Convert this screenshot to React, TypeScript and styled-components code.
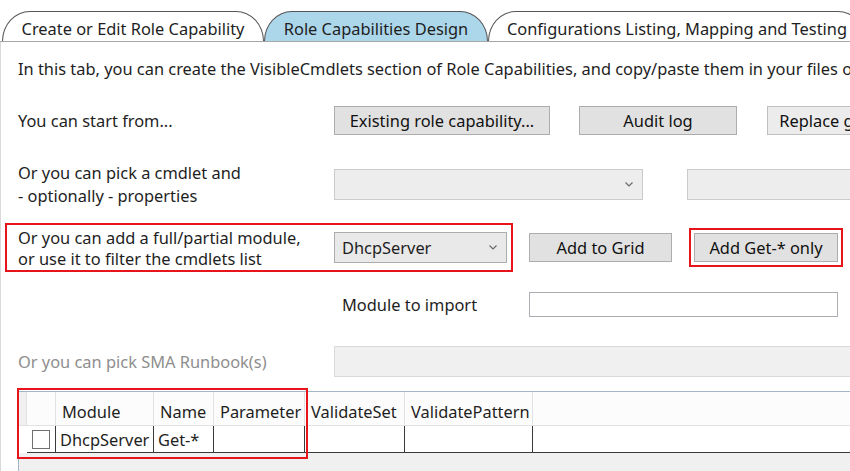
import React from "react";
import styled, { createGlobalStyle } from "styled-components";

const GlobalStyle = createGlobalStyle`
  html, body {
    margin: 0;
    padding: 0;
    background: #fff;
  }
  body {
    font-family: "Noto Sans", "Open Sans", sans-serif;
    font-size: 16.4px;
    color: #1e1e1e;
  }
`;

const Window = styled.div`
  width: 850px;
  height: 471px;
  overflow: hidden;
  background: #fff;
  display: flex;
  flex-direction: column;
`;

const TabStrip = styled.div`
  display: flex;
  align-items: flex-end;
  height: 41px;
  padding-left: 2px;
  border-bottom: 1px solid #a6a6a6;
  flex-shrink: 0;
  overflow: hidden;
`;

const Tab = styled.div<{ $active?: boolean; $w: number }>`
  flex: 0 0 ${(p) => p.$w}px;
  height: 30px;
  box-sizing: border-box;
  border: 1px solid #555;
  border-bottom: none;
  border-radius: 28px 28px 0 0 / 30px 30px 0 0;
  background: ${(p) => (p.$active ? "#acd6ea" : "#fff")};
  display: flex;
  align-items: center;
  justify-content: center;
  padding-top: 3px;
  white-space: nowrap;
`;

const Panel = styled.div`
  flex: 1;
  min-height: 0;
  border-left: 1px solid #d9d9d9;
  padding: 17px 0 0 17px;
  display: flex;
  flex-direction: column;
`;

const Intro = styled.div`
  line-height: 20px;
  height: 20px;
  white-space: nowrap;
`;

const Row = styled.div<{ $top: number; $h?: number }>`
  display: flex;
  align-items: center;
  margin-top: ${(p) => p.$top}px;
  ${(p) => (p.$h ? `height: ${p.$h}px;` : "")}
  white-space: nowrap;
  flex-shrink: 0;
`;

const Label = styled.div<{ $muted?: boolean; $lh?: number }>`
  flex: 0 0 316px;
  line-height: ${(p) => p.$lh ?? 20}px;
  color: ${(p) => (p.$muted ? "#8e8e8e" : "inherit")};
`;

const BoxedLabel = styled(Label)`
  height: 45px;
  padding-top: 2px;
  box-sizing: border-box;
`;

const InlineLabel = styled.div`
  flex: 0 0 195px;
  box-sizing: border-box;
  margin-left: 316px;
  padding-left: 8px;
`;

const Button = styled.button<{ $w: number; $disabled?: boolean; $gap?: number }>`
  flex: 0 0 ${(p) => p.$w}px;
  height: 29px;
  margin-left: ${(p) => p.$gap ?? 0}px;
  box-sizing: border-box;
  border: 1px solid ${(p) => (p.$disabled ? "#bfbfbf" : "#adadad")};
  background: ${(p) => (p.$disabled ? "#ececec" : "#e1e1e1")};
  font: inherit;
  color: #111;
  padding: 0;
  text-align: center;
  white-space: nowrap;
  overflow: hidden;
`;

const Combo = styled.div<{ $w: number; $gap?: number; $active?: boolean }>`
  flex: 0 0 ${(p) => p.$w}px;
  height: 31px;
  margin-left: ${(p) => p.$gap ?? 0}px;
  box-sizing: border-box;
  border: 1px solid ${(p) => (p.$active ? "#acacac" : "#cbcbcb")};
  background: ${(p) => (p.$active ? "#e9e9e9" : "#ededed")};
  display: flex;
  align-items: center;
  justify-content: space-between;
  padding: 0 9px 0 7px;
`;

const Chevron = () => (
  <svg width="8" height="5" viewBox="0 0 8 5">
    <polyline points="0.5,0.5 4,4 7.5,0.5" fill="none" stroke="#6a6a6a" strokeWidth="1.2" />
  </svg>
);

const Highlight = styled.div<{ $pad: string; $shift?: number }>`
  display: flex;
  align-items: center;
  border: 2px solid #e8141b;
  padding: ${(p) => p.$pad};
  margin-left: ${(p) => p.$shift ?? 0}px;
`;

const TextBox = styled.div<{ $w: number; $disabled?: boolean }>`
  flex: 0 0 ${(p) => p.$w}px;
  height: 100%;
  box-sizing: border-box;
  border: 1px solid ${(p) => (p.$disabled ? "#d9d9d9" : "#abadb3")};
  background: ${(p) => (p.$disabled ? "#f0f0f0" : "#fff")};
`;

const GridWrap = styled.div`
  position: relative;
  margin-top: 14px;
  flex: 1;
  border-top: 1px solid #a3b5c7;
  border-left: 1px solid #a3b5c7;
  background: #f0f0f0;
`;

const GridTable = styled.div`
  display: grid;
  grid-template-columns: 8px 29px 98px 60px 91px 100px 128px 1fr;
  grid-template-rows: 34px 27px;
`;

const HeadCell = styled.div<{ $shade?: boolean; $last?: boolean }>`
  background: ${(p) => (p.$shade ? "#f0f0f0" : "#fcfcfc")};
  border-right: ${(p) => (p.$last ? "none" : "1px solid #e2e2e2")};
  border-bottom: 1px solid #e2e2e2;
  padding: 5px 0 0 6px;
  display: flex;
  align-items: center;
  white-space: nowrap;
`;

const Cell = styled.div<{ $lead?: boolean; $last?: boolean }>`
  background: #fff;
  border-right: ${(p) => (p.$lead || p.$last ? "none" : "1px solid #3a3a3a")};
  border-bottom: ${(p) => (p.$lead ? "none" : "1px solid #3a3a3a")};
  padding-left: 4px;
  display: flex;
  align-items: center;
  white-space: nowrap;
`;

const CheckCell = styled(Cell)`
  justify-content: center;
  padding-left: 0;
`;

const CheckBox = styled.div`
  width: 18px;
  height: 19px;
  box-sizing: border-box;
  border: 1px solid #707070;
  background: #fff;
`;

const Frame = styled.div`
  position: absolute;
  left: -2px;
  top: -4px;
  width: 291px;
  height: 71px;
  box-sizing: border-box;
  border: 2px solid #e8141b;
  pointer-events: none;
`;

export default function App() {
  return (
    <Window>
      <GlobalStyle />
      <TabStrip>
        <Tab $w={262}>Create or Edit Role Capability</Tab>
        <Tab $w={224} $active>
          Role Capabilities Design
        </Tab>
        <Tab $w={378}>Configurations Listing, Mapping and Testing</Tab>
      </TabStrip>
      <Panel>
        <Intro>
          In this tab, you can create the VisibleCmdlets section of Role Capabilities, and copy/paste them in your files or
        </Intro>

        <Row $top={27} $h={29}>
          <Label>You can start from...</Label>
          <Button $w={216}>Existing role capability...</Button>
          <Button $w={158} $gap={29}>
            Audit log
          </Button>
          <Button $w={120} $gap={30} $disabled>
            Replace grid
          </Button>
        </Row>

        <Row $top={26}>
          <Label $lh={23}>
            Or you can pick a cmdlet and
            <br />- optionally - properties
          </Label>
          <Combo $w={309}>
            <span />
            <Chevron />
          </Combo>
          <Combo $w={200} $gap={44} />
        </Row>

        <Row $top={16}>
          <Highlight $pad="0 4px 0 11px" $shift={-13}>
            <BoxedLabel $lh={21}>
              Or you can add a full/partial module,
              <br />
              or use it to filter the cmdlets list
            </BoxedLabel>
            <Combo $w={173} $active>
              <span>DhcpServer</span>
              <Chevron />
            </Combo>
          </Highlight>
          <Button $w={143} $gap={16}>
            Add to Grid
          </Button>
          <Highlight $pad="3px" $shift={17}>
            <Button $w={144}>Add Get-* only</Button>
          </Highlight>
        </Row>

        <Row $top={20} $h={25}>
          <InlineLabel>Module to import</InlineLabel>
          <TextBox $w={309} />
        </Row>

        <Row $top={29} $h={31}>
          <Label $muted>Or you can pick SMA Runbook(s)</Label>
          <TextBox $w={530} $disabled />
        </Row>

        <GridWrap>
          <GridTable>
            <HeadCell $shade />
            <HeadCell />
            <HeadCell>Module</HeadCell>
            <HeadCell>Name</HeadCell>
            <HeadCell>Parameter</HeadCell>
            <HeadCell>ValidateSet</HeadCell>
            <HeadCell>ValidatePattern</HeadCell>
            <HeadCell $last />

            <Cell $lead />
            <CheckCell>
              <CheckBox />
            </CheckCell>
            <Cell>DhcpServer</Cell>
            <Cell>Get-*</Cell>
            <Cell />
            <Cell />
            <Cell />
            <Cell $last />
          </GridTable>
          <Frame />
        </GridWrap>
      </Panel>
    </Window>
  );
}
